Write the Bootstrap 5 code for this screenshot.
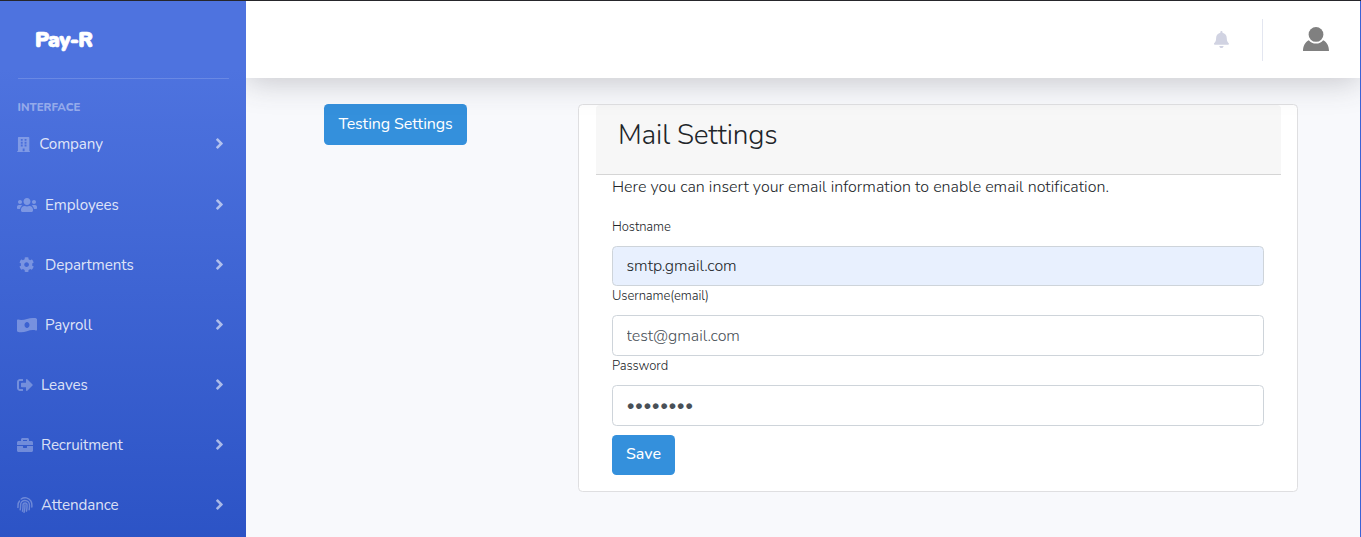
<!DOCTYPE html>
<html lang="en">
<head>
<meta charset="utf-8">
<meta name="viewport" content="width=device-width, initial-scale=1">
<title>Pay-R - Mail Settings</title>
<link href="https://cdn.jsdelivr.net/npm/bootstrap@5.3.0/dist/css/bootstrap.min.css" rel="stylesheet">
<style>
body{font-family:Nunito,Lato,"Open Sans",sans-serif;font-size:16px;font-weight:350;color:#212529;background:#f8f9fc;height:537px;overflow:hidden;border-top:1px solid #26262b;line-height:24px}
.shell{height:536px;border-right:1px solid #3a62d6}
.side{width:246px;height:676px;background:linear-gradient(180deg,#4e73df 10%,#224abe 100%);padding:0 17px;position:relative;z-index:2}
.brand{height:77px;padding:23px 0 0 18px;font-weight:900;font-size:21px;line-height:33px;color:#fff;letter-spacing:-.65px;-webkit-text-stroke:.7px #fff}
.rule{height:1px;background:rgba(255,255,255,.16);margin-left:1px}
.heading{font-weight:800;font-size:11.4px;line-height:14px;color:rgba(255,255,255,.42);margin-top:21px;height:15.4px;padding-left:.5px}
.item{height:60.15px;color:rgba(255,255,255,.84);font-size:15.2px;font-weight:400;letter-spacing:-.1px;text-decoration:none;margin-right:5px}
.item svg{fill:#fff;opacity:.3;height:15.2px;flex:none}
.item .arrow{opacity:.58;width:9px;height:17px;margin-left:auto;margin-top:-1px}
.item span{white-space:nowrap}
.topbar{height:77px;background:#fff;box-shadow:0 3px 32px rgba(58,59,69,.28);padding-right:31px;position:relative}
.vr-line{width:1px;height:42px;background:#e3e6f0;margin:0 40px 0 33px}
.bell{height:17px;fill:#d1d3e2;margin-top:-1px}
.act{background:#3490dc;color:#fff;border:0;border-radius:4.5px;font-size:16px;line-height:24px;padding:0 0 2px;font-weight:450}
.act:hover{background:#2779bd;color:#fff}
.act-test{width:143px;height:41px;margin-left:78px;letter-spacing:-.1px}
.act-save{width:63px;height:40px;margin-top:9px;font-weight:500}
.panel{width:720px;height:388px;margin-left:111px;border:1px solid #dfdfe1;border-radius:4.5px;padding:0 16px 0 17px;background:#fff}
.panel-head{height:70px;background:#f7f7f7;border-bottom:1px solid #d5d5d5;border-radius:4px 4px 0 0;padding:11px 22px}
.panel-head h1{font-size:28px;font-weight:320;line-height:38px;margin:0;letter-spacing:-.15px}
.fields{padding:0 17px 0 16px}
.intro{height:41.5px;margin:0;line-height:24px;white-space:nowrap;letter-spacing:.015px}
.fields label{display:block;font-size:13px;line-height:20px;height:29.3px;letter-spacing:-.07px}
.fields .form-control{height:40.4px;font-size:16px;font-weight:350;padding:5px 13.5px;border-color:#ced4da;border-radius:4.5px;color:#495057;letter-spacing:-.03px}
.fields .filled{background:#e8f0fe;color:#212529}
</style>
</head>
<body>
<div class="shell d-flex overflow-hidden">
<nav class="side flex-shrink-0">
<div class="brand">Pay-R</div>
<div class="rule"></div>
<div class="heading">INTERFACE</div>
<a class="item d-flex align-items-center" href="#" style="margin-top:-1px"><svg viewBox="0 0 448 512" style="margin-right:9px"><path fill-rule="evenodd" d="M436 480h-20V24c0-13-11-24-24-24H56C43 0 32 11 32 24v456H12c-7 0-12 5-12 12v20h448v-20c0-7-5-12-12-12zM128 64h64v64h-64zM256 64h64v64h-64zM128 160h64v64h-64zM256 160h64v64h-64zM128 256h64v64h-64zM256 256h64v64h-64zM192 480v-96h64v96z"/></svg><span>Company</span><svg class="arrow" viewBox="0 0 256 512"><use href="#angle"/></svg></a>
<a class="item d-flex align-items-center" href="#"><svg viewBox="0 0 640 512" style="margin-right:8px;width:20px;height:16px"><path d="M96 224c35.300 0 64-28.700 64-64s-28.700-64-64-64-64 28.700-64 64 28.700 64 64 64zm448 0c35.300 0 64-28.700 64-64s-28.700-64-64-64-64 28.700-64 64 28.700 64 64 64zm32 32h-64c-17.600 0-33.500 7.100-45.100 18.600 40.300 22.100 68.900 62 75.100 109.400h66c17.700 0 32-14.300 32-32v-32c0-35.300-28.700-64-64-64zm-256 0c61.900 0 112-50.100 112-112S381.900 32 320 32 208 82.100 208 144s50.100 112 112 112zm76.800 32h-8.300c-20.800 10-43.900 16-68.500 16s-47.600-6-68.500-16h-8.300C179.600 288 128 339.600 128 403.200V432c0 26.500 21.500 48 48 48h288c26.500 0 48-21.500 48-48v-28.800c0-63.600-51.600-115.200-115.200-115.200zm-223.700-13.400C161.500 263.100 145.600 256 128 256H64c-35.300 0-64 28.700-64 64v32c0 17.700 14.300 32 32 32h65.900c6.300-47.400 34.900-87.300 75.200-109.400z"/></svg><span>Employees</span><svg class="arrow" viewBox="0 0 256 512"><use href="#angle"/></svg></a>
<a class="item d-flex align-items-center" href="#"><svg viewBox="0 0 512 512" style="margin:0 10.500px 0 2.300px"><path d="M487.400 315.700l-42.600-24.600c4.300-23.200 4.300-47 0-70.200l42.600-24.600c4.900-2.800 7.100-8.600 5.500-14-11.100-35.600-30-67.800-54.700-94.600-3.800-4.100-10-5.100-14.800-2.300L380.800 110c-17.900-15.400-38.500-27.300-60.800-35.100V25.800c0-5.600-3.900-10.500-9.400-11.700-36.700-8.200-74.300-7.800-109.200 0-5.500 1.200-9.400 6.100-9.400 11.700V75c-22.200 7.900-42.800 19.800-60.800 35.100L88.700 85.500c-4.900-2.800-11-1.900-14.800 2.300-24.700 26.700-43.600 58.900-54.700 94.600-1.700 5.400.6 11.200 5.500 14L67.300 221c-4.300 23.200-4.300 47 0 70.200l-42.600 24.600c-4.900 2.800-7.100 8.600-5.500 14 11.100 35.600 30 67.800 54.700 94.600 3.800 4.100 10 5.100 14.800 2.300l42.600-24.600c17.900 15.400 38.500 27.300 60.800 35.100v49.200c0 5.600 3.900 10.500 9.400 11.700 36.700 8.200 74.300 7.800 109.200 0 5.500-1.200 9.400-6.100 9.400-11.700v-49.200c22.200-7.900 42.800-19.800 60.800-35.100l42.600 24.600c4.900 2.800 11 1.900 14.800-2.300 24.700-26.700 43.600-58.900 54.700-94.600 1.500-5.500-.7-11.300-5.600-14.100zM256 336c-44.100 0-80-35.900-80-80s35.900-80 80-80 80 35.900 80 80-35.900 80-80 80z"/></svg><span>Departments</span><svg class="arrow" viewBox="0 0 256 512"><use href="#angle"/></svg></a>
<a class="item d-flex align-items-center" href="#"><svg viewBox="0 0 640 512" style="margin-right:8px;width:20px;height:16px"><path fill-rule="evenodd" d="M621 44C583 25 545 32 507 32 382 32 258 96 133 96 96 96 67 92 41 81 21 73 0 88 0 109v330c0 12 7 24 19 30 37 18 75 20 113 20 125 0 250-72 375-72 38 0 66 4 92 15 20 8 41-7 41-28V73c0-12-7-23-19-29zM320 352c-44 0-80-43-80-96s36-96 80-96 80 43 80 96-36 96-80 96z"/></svg><span>Payroll</span><svg class="arrow" viewBox="0 0 256 512"><use href="#angle"/></svg></a>
<a class="item d-flex align-items-center" href="#"><svg viewBox="0 0 512 512" style="margin-right:8px;width:16px;height:16px"><path d="M497 273L329 441c-15 15-41 4-41-17v-96H152c-13 0-24-11-24-24v-96c0-13 11-24 24-24h136V88c0-21 26-32 41-17l168 168c9 9 9 25 0 34zM192 436v-40c0-7-5-12-12-12H96c-18 0-32-14-32-32V160c0-18 14-32 32-32h84c7 0 12-5 12-12V76c0-7-5-12-12-12H96C43 64 0 107 0 160v192c0 53 43 96 96 96h84c7 0 12-5 12-12z"/></svg><span>Leaves</span><svg class="arrow" viewBox="0 0 256 512"><use href="#angle"/></svg></a>
<a class="item d-flex align-items-center" href="#"><svg viewBox="0 0 512 512" style="margin-right:8px;width:16px;height:16px"><path d="M320 336c0 9-7 16-16 16h-96c-9 0-16-7-16-16v-48H0v144c0 26 22 48 48 48h416c26 0 48-22 48-48V288H320v48zm144-208h-80V80c0-26-22-48-48-48H176c-26 0-48 22-48 48v48H48c-26 0-48 22-48 48v80h512v-80c0-26-22-48-48-48zm-144 0H192V96h128v32z"/></svg><span>Recruitment</span><svg class="arrow" viewBox="0 0 256 512"><use href="#angle"/></svg></a>
<a class="item d-flex align-items-center" href="#"><svg viewBox="0 0 512 512" style="margin-right:8px;width:16px;height:16px"><g fill="none" stroke="#fff" stroke-width="46" stroke-linecap="round"><path d="M256 246c2 88-8 168-30 243M176 453c17-61 19-126 17-203 0-34 28-61 64-61s63 28 64 62c1 68-3 135-17 201M102 407c14-50 12-96 12-155 0-79 60-141 141-141 84 0 143 64 144 142 0 56-1 105-11 154M30 333c4-26 3-50 3-76C34 209 50 162 80 127M134 65c100-72 239-47 308 60 36 59 39 119 33 195"/></g></svg><span>Attendance</span><svg class="arrow" viewBox="0 0 256 512"><use href="#angle"/></svg></a>
</nav>
<div class="flex-grow-1">
<header class="topbar d-flex align-items-center justify-content-end">
<svg class="bell" viewBox="0 0 448 512"><path d="M224 512c35 0 64-29 64-64H160c0 35 29 64 64 64zm215-150c-19-21-55-52-55-154 0-78-55-140-128-155V32c0-18-14-32-32-32s-32 14-32 32v21C119 68 64 130 64 208c0 102-36 133-55 154-6 6-9 14-9 22 0 16 13 32 32 32h384c19 0 32-16 32-32 0-8-3-16-9-22z"/></svg>
<div class="vr-line"></div>
<svg width="26" height="24" viewBox="0 0 26 24" fill="#808080" style="margin-top:-1px"><circle cx="13" cy="7.400" r="7.400"/><path d="M5.800 13.200a9.300 9.300 0 0 0 14.400 0C24 15 26 19 26 24H0c0-5 2-9 5.800-10.800z"/></svg>
</header>
<main class="d-flex align-items-start" style="padding-top:26px">
<button class="btn act act-test" type="button">Testing Settings</button>
<section class="panel">
<div class="panel-head"><h1>Mail Settings</h1></div>
<form class="fields">
<p class="intro">Here you can insert your email information to enable email notification.</p>
<label for="host">Hostname</label>
<input id="host" class="form-control filled" value="smtp.gmail.com">
<label for="user">Username(email)</label>
<input id="user" class="form-control" type="text" value="test@gmail.com">
<label for="pass">Password</label>
<input id="pass" class="form-control" type="password" value="password">
<button class="btn act act-save" type="button">Save</button>
</form>
</section>
</main>
</div>
</div>
<svg width="0" height="0" class="position-absolute"><defs><path id="angle" d="M224 273L88 409c-9 9-25 9-34 0l-23-23c-9-9-9-25 0-34l97-96-97-96c-9-9-9-25 0-34l23-23c9-9 25-9 34 0l136 136c9 9 9 25 0 34z"/></defs></svg>
<script src="https://cdn.jsdelivr.net/npm/bootstrap@5.3.0/dist/js/bootstrap.bundle.min.js"></script>
</body>
</html>
